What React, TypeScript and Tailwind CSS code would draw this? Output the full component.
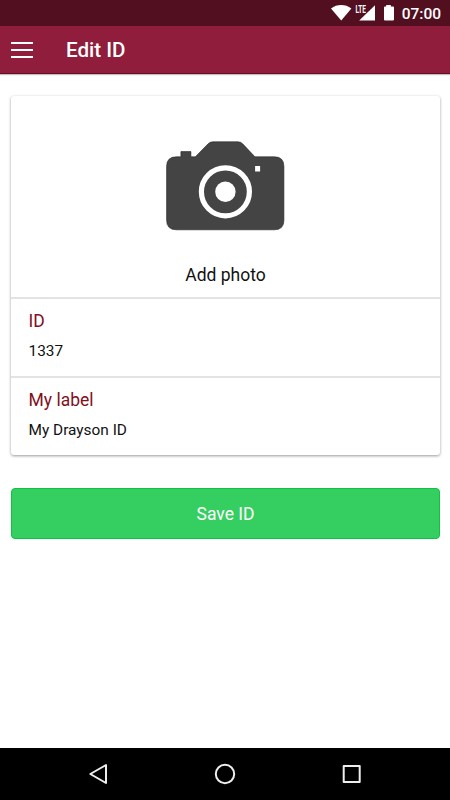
import { useState } from 'react'

type Field = {
  label: string
  value: string
}

const fields: Field[] = [
  { label: 'ID',       value: '1337' },
  { label: 'My label', value: 'My Drayson ID' },
]

function StatusBar() {
  return (
    <div className="h-[26px] shrink-0 bg-[#510f20] flex items-center justify-end pr-[9px] text-white">
      <svg width="64" height="26" viewBox="0 -5 64 26" fill="currentColor" className="mr-[7px]">
        <path d="M10.2 15.6 0 3.4C6 -1.1 14.4 -1.1 20.4 3.4Z" />
        <path d="M44 0.2V15.6H28.2Z" />
        <path d="M55.2 0h4.6v1.6h2.2q1 0 1 1v12q0 1-1 1H54q-1 0-1-1v-12q0-1 1-1h1.2z" />
        {/* network type, cut out of the signal wedge */}
        <text x="24.6" y="7.8" fontSize="10.5" fontWeight="700" textLength="10.4" lengthAdjust="spacingAndGlyphs" stroke="#510f20" strokeWidth="0.8" paintOrder="stroke">
          LTE
        </text>
      </svg>
      <span className="pt-[2px] text-[15.5px] leading-6 font-medium">07:00</span>
    </div>
  )
}

function Header() {
  return (
    <header className="h-12 shrink-0 bg-[#8f1d3b] border-b border-[#6b0d20] shadow-[0_1px_1px_rgba(0,0,0,0.25)] flex items-center pl-[11px]">
      <button aria-label="Menu" className="flex flex-col gap-[5px] mt-px">
        <span className="block w-[22px] h-[2px] bg-white" />
        <span className="block w-[22px] h-[2px] bg-white" />
        <span className="block w-[22px] h-[2px] bg-white" />
      </button>
      <h1 className="ml-[33px] pt-px text-[20.6px] leading-[46px] font-medium text-white">Edit ID</h1>
    </header>
  )
}

function CameraIcon() {
  return (
    <svg width="120" height="90" viewBox="0.6 0.2 120 90">
      <path
        fill="#444"
        stroke="#222"
        strokeWidth="0.6"
        d="M11 16H15.5V10.8H25.5V16H30L42.5 3.2Q44.5 1 47.5 1H72.5Q75.5 1 77.5 3.2L89.5 16H109Q118.5 16 118.5 25.5V79.5Q118.5 89 109 89H11Q1.2 89 1.2 79.5V25.5Q1.2 16 11 16Z"
      />
      <circle cx="60" cy="51" r="24" fill="none" stroke="#fff" strokeWidth="5.2" />
      <circle cx="60" cy="51" r="10.2" fill="#fff" />
      <rect x="89.7" y="25.2" width="5" height="5.5" fill="#fff" />
    </svg>
  )
}

function NavBar() {
  return (
    <nav className="h-[52px] shrink-0 bg-black flex items-center justify-center gap-[102px] text-[#eee]">
      <svg width="24" height="24" viewBox="0 0 24 24" fill="none" stroke="currentColor" strokeWidth="2" strokeLinejoin="round">
        <path d="M19 3V21L3.3 12Z" />
      </svg>
      <svg width="24" height="24" viewBox="0 0 24 24" fill="none" stroke="currentColor" strokeWidth="2">
        <circle cx="12" cy="12" r="9.2" />
      </svg>
      <svg width="24" height="24" viewBox="0 0 24 24" fill="none" stroke="currentColor" strokeWidth="2" strokeLinejoin="round">
        <rect x="4.7" y="4" width="16" height="16" />
      </svg>
    </nav>
  )
}

export default function App() {
  const [saved, setSaved] = useState(false)

  return (
    <div className="w-full h-screen flex flex-col bg-white font-['Roboto',sans-serif]">
      <StatusBar />
      <Header />

      <main className="flex-1 pl-[11px] pt-[22px] pr-[10px]">
        {/* Card */}
        <section className="h-[359px] rounded-[3px] bg-white shadow-[0_1px_3px_rgba(0,0,0,0.4)]">
          <button className="w-full h-[201px] flex flex-col items-center pt-[45px]">
            <CameraIcon />
            <span className="mt-8 text-[17.5px] leading-6 text-[#111]">Add photo</span>
          </button>
          {fields.map((f) => (
            <div key={f.label} className="h-[79px] border-t-2 border-[#e3e3e3] pl-[17.5px] pt-[10px]">
              <p className="text-[17.5px] leading-6 text-[#80101c]">{f.label}</p>
              <p className="mt-[7px] text-[15.4px] leading-[22px] text-[#111]">{f.value}</p>
            </div>
          ))}
        </section>

        <button
          onClick={() => setSaved(true)}
          disabled={saved}
          className="mt-[33px] w-full h-[51px] rounded-[4px] border border-[#0cc440] bg-[#35ce60] text-[17.5px] leading-6 text-white"
        >
          Save ID
        </button>
      </main>

      <NavBar />
    </div>
  )
}
